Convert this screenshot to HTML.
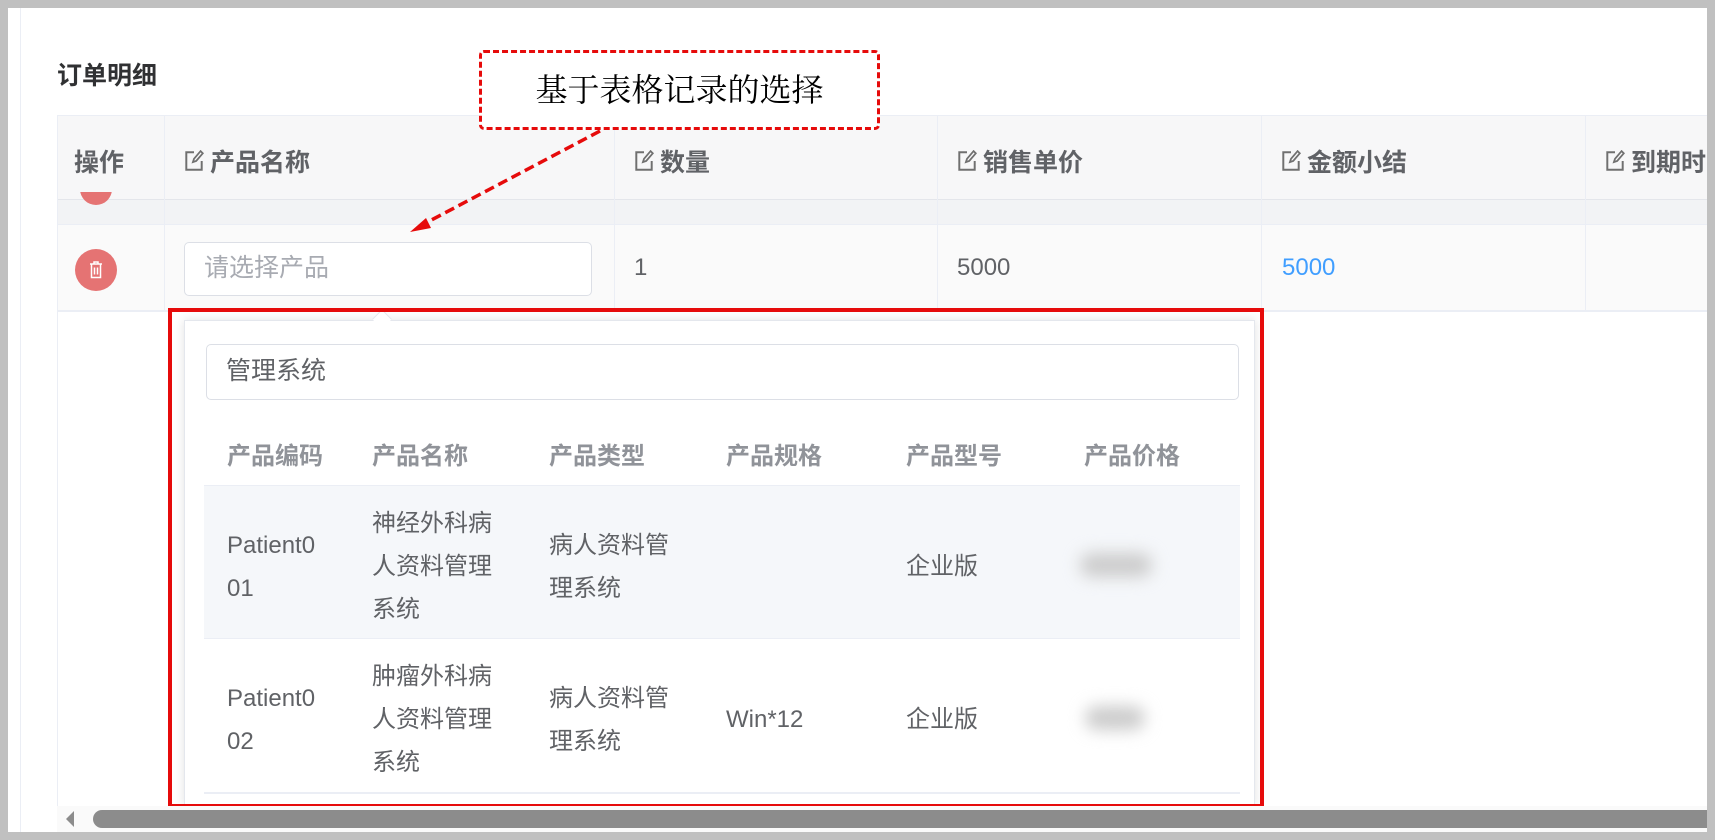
<!DOCTYPE html>
<html><head><meta charset="utf-8"><style>
*{margin:0;padding:0;box-sizing:border-box}
body{width:1715px;height:840px;overflow:hidden;background:#c0c0c0;font-family:"Liberation Sans","Noto Sans CJK SC",sans-serif;position:relative;color:#606266}
.a{position:absolute}
.page{left:8px;top:8px;width:1699px;height:824px;background:#fff}
.card{left:20px;top:8px;width:1687px;height:824px;border-left:1px solid #ebeef5;background:#fff}
.th{font-weight:bold;font-size:25px;color:#606266;top:143px;display:flex;align-items:center;white-space:nowrap}
.ic{width:20px;height:22px;margin-right:6px;flex-shrink:0}
.vl{width:1px;background:#ebeef5}
.cell{font-size:24px;line-height:43px;color:#606266}
.ph{font-weight:bold;font-size:24px;color:#909399;top:436px}
</style></head><body>
<div class="a page"></div>
<div class="a card"></div>
<div class="a" style="left:57px;top:56px;font-size:25px;font-weight:bold;color:#303133">订单明细</div>

<div class="a" style="left:57px;top:115px;width:1650px;height:85px;background:#f7f7f8;border-top:1px solid #ebeef5;border-bottom:1px solid #e4e6eb"></div>
<div class="a" style="left:57px;top:200px;width:1650px;height:25px;background:#f2f3f5;border-bottom:1px solid #ebeef5"></div>
<div class="a" style="left:57px;top:225px;width:1650px;height:87px;background:#fafafa;border-bottom:2px solid #ebeef5"></div>
<div class="a vl" style="left:57px;top:115px;height:700px"></div>
<div class="a vl" style="left:164px;top:115px;height:197px"></div>
<div class="a vl" style="left:614px;top:115px;height:197px"></div>
<div class="a vl" style="left:937px;top:115px;height:197px"></div>
<div class="a vl" style="left:1261px;top:115px;height:197px"></div>
<div class="a vl" style="left:1585px;top:115px;height:197px"></div>

<div class="a th" style="left:74px">操作</div>
<div class="a th" style="left:184px"><svg class="ic" viewBox="0 0 18 20"><path d="M9 2H2v16h14V10" fill="none" stroke="#707070" stroke-width="1.8"/><path d="M15 1l2 2-6 7-3 1 1-3z" fill="none" stroke="#707070" stroke-width="1.6"/></svg>产品名称</div>
<div class="a th" style="left:634px"><svg class="ic" viewBox="0 0 18 20"><path d="M9 2H2v16h14V10" fill="none" stroke="#707070" stroke-width="1.8"/><path d="M15 1l2 2-6 7-3 1 1-3z" fill="none" stroke="#707070" stroke-width="1.6"/></svg>数量</div>
<div class="a th" style="left:957px"><svg class="ic" viewBox="0 0 18 20"><path d="M9 2H2v16h14V10" fill="none" stroke="#707070" stroke-width="1.8"/><path d="M15 1l2 2-6 7-3 1 1-3z" fill="none" stroke="#707070" stroke-width="1.6"/></svg>销售单价</div>
<div class="a th" style="left:1281px"><svg class="ic" viewBox="0 0 18 20"><path d="M9 2H2v16h14V10" fill="none" stroke="#707070" stroke-width="1.8"/><path d="M15 1l2 2-6 7-3 1 1-3z" fill="none" stroke="#707070" stroke-width="1.6"/></svg>金额小结</div>
<div class="a th" style="left:1605px;width:102px;overflow:hidden"><svg class="ic" viewBox="0 0 18 20"><path d="M9 2H2v16h14V10" fill="none" stroke="#707070" stroke-width="1.8"/><path d="M15 1l2 2-6 7-3 1 1-3z" fill="none" stroke="#707070" stroke-width="1.6"/></svg>到期时间</div>

<div class="a" style="left:80px;top:192px;width:32px;height:13px;overflow:hidden"><div style="width:32px;height:32px;border-radius:50%;background:#e57373;margin-top:-19px"></div></div>
<div class="a" style="left:75px;top:249px;width:42px;height:42px;border-radius:50%;background:#e57373"></div>
<svg class="a" style="left:87px;top:260px" width="18" height="20" viewBox="0 0 18 20"><path d="M3 4h12M7 4V2h4v2M4.5 4.5v13h9v-13M7.5 7.5v7M10.5 7.5v7" fill="none" stroke="#fff" stroke-width="1.5"/></svg>

<div class="a" style="left:184px;top:242px;width:408px;height:54px;border:1.5px solid #dcdfe6;border-radius:5px;background:#fff;font-size:25px;color:#a8abb2;line-height:51px;padding-left:19px">请选择产品</div>
<div class="a" style="left:634px;top:254px;font-size:24px">1</div>
<div class="a" style="left:957px;top:254px;font-size:24px">5000</div>
<div class="a" style="left:1282px;top:254px;font-size:24px;color:#409eff">5000</div>

<div class="a" style="left:184px;top:320px;width:1071px;height:485px;background:#fff;box-shadow:0 0 10px rgba(0,0,0,.12);border:1px solid #e4e7ed"></div>
<div class="a" style="left:375px;top:312px;width:14px;height:14px;background:#fff;transform:rotate(45deg);border-left:1px solid #e4e7ed;border-top:1px solid #e4e7ed"></div>
<div class="a" style="left:206px;top:344px;width:1033px;height:56px;border:1.5px solid #dcdfe6;border-radius:5px;font-size:25px;line-height:53px;padding-left:19px;color:#606266">管理系统</div>
<div class="a ph" style="left:227px">产品编码</div>
<div class="a ph" style="left:372px">产品名称</div>
<div class="a ph" style="left:549px">产品类型</div>
<div class="a ph" style="left:726px">产品规格</div>
<div class="a ph" style="left:906px">产品型号</div>
<div class="a ph" style="left:1084px">产品价格</div>
<div class="a" style="left:204px;top:485px;width:1036px;height:154px;background:#f5f7fa;border-top:1px solid #ebeef5;border-bottom:1px solid #ebeef5"></div>
<div class="a" style="left:204px;top:792px;width:1036px;height:2px;background:#ebeef5"></div>

<div class="a cell" style="left:227px;top:524px">Patient0<br>01</div>
<div class="a cell" style="left:372px;top:502px">神经外科病<br>人资料管理<br>系统</div>
<div class="a cell" style="left:549px;top:524px">病人资料管<br>理系统</div>
<div class="a cell" style="left:906px;top:545px">企业版</div>
<div class="a" style="left:1080px;top:553px;width:72px;height:24px;border-radius:12px;background:#ccc;filter:blur(8px)"></div>

<div class="a cell" style="left:227px;top:677px">Patient0<br>02</div>
<div class="a cell" style="left:372px;top:655px">肿瘤外科病<br>人资料管理<br>系统</div>
<div class="a cell" style="left:549px;top:677px">病人资料管<br>理系统</div>
<div class="a cell" style="left:726px;top:698px">Win*12</div>
<div class="a cell" style="left:906px;top:698px">企业版</div>
<div class="a" style="left:1085px;top:706px;width:60px;height:24px;border-radius:12px;background:#ccc;filter:blur(8px)"></div>

<div class="a" style="left:168px;top:308px;width:1096px;height:500px;border:4px solid #e60b0b"></div>

<div class="a" style="left:57px;top:806px;width:1650px;height:26px;background:#fafafa"></div>
<svg class="a" style="left:64px;top:810px" width="12" height="18"><path d="M10 1L2 9l8 8z" fill="#8c8c8c"/></svg>
<div class="a" style="left:93px;top:810px;width:1614px;height:18px;border-radius:9px 0 0 9px;background:#8c8c8c"></div>

<div class="a" style="left:479px;top:50px;width:401px;height:80px;border:3px dashed #e60b0b;border-radius:5px;background:#fff;font-family:'Liberation Serif','Noto Serif CJK SC',serif;font-size:32px;color:#000;text-align:center;line-height:74px">基于表格记录的选择</div>
<svg class="a" style="left:0;top:0" width="1715" height="840"><path d="M600 131L420 226" stroke="#e60b0b" stroke-width="3.5" stroke-dasharray="10 5" fill="none"/><path d="M410 232l16-14 5 10z" fill="#e60b0b"/></svg>
</body></html>
